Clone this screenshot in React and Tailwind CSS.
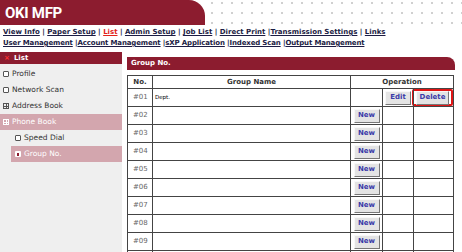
const navLine1 = [
  { label: 'View Info' },
  { label: 'Paper Setup' },
  { label: 'List', active: true },
  { label: 'Admin Setup' },
  { label: 'Job List' },
  { label: 'Direct Print', tight: true },
  { label: 'Transmission Settings' },
  { label: 'Links' },
];

const navLine2 = ['User Management', 'Account Management', 'sXP Application', 'Indexed Scan', 'Output Management'];

const sideItems = [
  { label: 'Profile', icon: 'box' },
  { label: 'Network Scan', icon: 'box' },
  { label: 'Address Book', icon: 'plus' },
  { label: 'Phone Book', icon: 'plus', active: true },
  { label: 'Speed Dial', icon: 'box', sub: true },
  { label: 'Group No.', icon: 'fill', sub: true, active: true },
];

// last row sits under the fold, only its top edge shows
const rows = ['#02', '#03', '#04', '#05', '#06', '#07', '#08', '#09', ''];

const Icon = ({ type, active }) => {
  if (type === 'plus') {
    return (
      <span className={`relative w-[6px] h-[6px] border ${active ? 'border-white' : 'border-[#555]'} flex items-center justify-center`}>
        <span className={`absolute w-[4px] h-px ${active ? 'bg-white' : 'bg-[#555]'}`} />
        <span className={`absolute w-px h-[4px] ${active ? 'bg-white' : 'bg-[#555]'}`} />
      </span>
    );
  }
  if (type === 'fill') {
    return (
      <span className="w-[6px] h-[6px] bg-white rounded-[1px] flex items-center justify-center">
        <span className="w-[2px] h-[3px] bg-[#8c1c2f]" />
      </span>
    );
  }
  return <span className="w-[6px] h-[6px] border border-[#555] rounded-[1px] bg-white" />;
};

const Btn = ({ children, w }) => (
  <button className={`${w} h-[14px] bg-[#e4e4e4] border border-t-[#f8f8f8] border-l-[#f8f8f8] border-r-[#777] border-b-[#777] text-[7px] font-bold text-[#3a3aa8] leading-none`}>
    {children}
  </button>
);

const App = () => {
  return (
    <div className="w-[462px] h-[252px] overflow-hidden bg-white font-['DejaVu_Sans',sans-serif] text-[#222]">
      <div className="flex h-[25px]">
        <div className="w-[205px] bg-[#8c1c2f] rounded-tr-[16px] pl-[5px] pt-[6px]">
          <span className="block text-white font-bold text-[15px] leading-none font-['Roboto',sans-serif] tracking-[-0.3px]">OKI MFP</span>
        </div>
        <div className="flex-1 bg-[radial-gradient(#d0d0d0_0.8px,transparent_1px)] bg-[size:10px_10px] bg-[position:2px_-2px]" />
      </div>

      <div className="px-[3px] pt-[2px] text-[7px] font-bold leading-[11px] text-[#1c1c44]">
        <div>
          {navLine1.map((n, i) => (
            <span key={n.label}>
              {i > 0 && (navLine1[i - 1].tight ? ' |' : ' | ')}
              <span className={`underline ${n.active ? 'text-[#e2231a]' : ''}`}>{n.label}</span>
            </span>
          ))}
        </div>
        <div className="tracking-[-0.15px]">
          {navLine2.map((n, i) => (
            <span key={n}>
              {i > 0 && ' |'}
              <span className="underline">{n}</span>
            </span>
          ))}
        </div>
      </div>

      <div className="flex mt-[3px] h-[202px]">
        <div className="w-[122px] bg-[#efefef]">
          <div className="h-[12px] bg-[#8c1c2f] flex items-center pl-[4px] gap-[4px] text-white text-[7px] font-bold">
            <span className="text-[#ff3030] text-[7px] leading-none">×</span>
            <span>List</span>
          </div>
          <div className="pt-[2px] text-[7.5px]">
            {sideItems.map((s) => (
              <div
                key={s.label}
                className={`h-[16px] flex items-center gap-[3px] ${s.sub ? 'ml-[11px] pl-[4px]' : 'pl-[3px]'} ${s.active ? 'bg-[#d3a6ae] text-white' : 'text-[#333]'}`}
              >
                <Icon type={s.icon} active={s.active} />
                <span>{s.label}</span>
              </div>
            ))}
          </div>
        </div>

        <div className="ml-[5px] pt-[5px] flex-1">
          <div className="w-[328px] h-[13px] bg-[#8c1c2f] rounded-tr-[8px] pl-[4px] flex items-center text-white text-[7px] font-bold">
            Group No.
          </div>
          <table className="mt-[5px] w-[326px] table-fixed border-collapse border border-[#777] text-[7px] leading-none">
            <colgroup>
              <col className="w-[25px]" />
              <col className="w-[198px]" />
              <col className="w-[32px]" />
              <col className="w-[31px]" />
              <col className="w-[40px]" />
            </colgroup>
            <thead>
              <tr className="h-[13px] text-[#333]">
                <th className="border border-[#444] font-bold p-0">No.</th>
                <th className="border border-[#444] font-bold p-0">Group Name</th>
                <th colSpan={3} className="border border-[#444] font-bold p-0">Operation</th>
              </tr>
            </thead>
            <tbody>
              <tr className="h-[18px]">
                <td className="border border-[#444] pl-[5px] text-[#666]">#01</td>
                <td className="border border-[#444] pl-[2px] text-[5.5px] text-black">Dept.</td>
                <td className="border border-[#444]" />
                <td className="border border-[#444] text-center p-0">
                  <Btn w="w-[26px]">Edit</Btn>
                </td>
                <td className="border border-[#444] p-0">
                  <div className="-ml-[2px] w-[41px] h-[17px] border-2 border-[#e01515] rounded-[2px] flex items-center justify-center">
                    <Btn w="w-[33px]">Delete</Btn>
                  </div>
                </td>
              </tr>
              {rows.map((r, i) => (
                <tr key={i} className="h-[18px]">
                  <td className="border border-[#444] pl-[5px] text-[#666]">{r}</td>
                  <td className="border border-[#444]" />
                  <td className="border border-[#444] text-center p-0">
                    {r && <Btn w="w-[26px]">New</Btn>}
                  </td>
                  <td className="border border-[#444]" />
                  <td className="border border-[#444]" />
                </tr>
              ))}
            </tbody>
          </table>
        </div>
      </div>
    </div>
  );
};

export default App;
